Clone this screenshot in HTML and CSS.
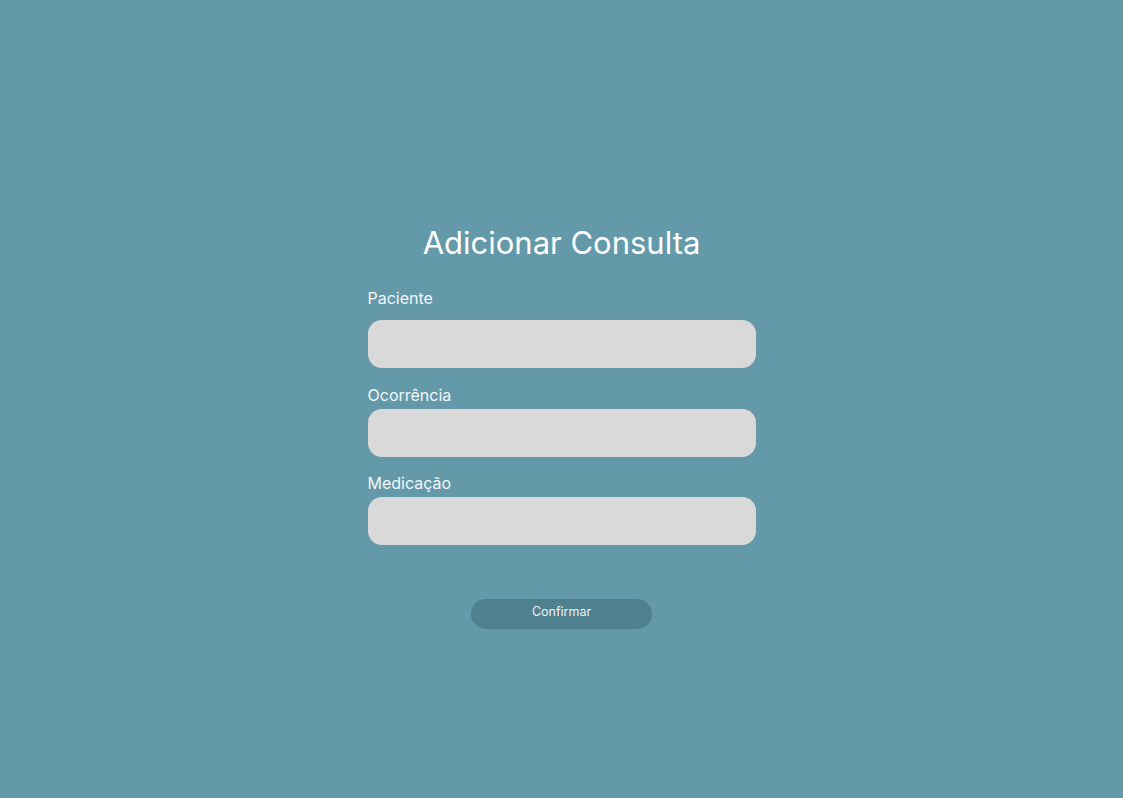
FILE: index.html
```html
<!DOCTYPE html>
<html lang="pt">
<head>
<meta charset="utf-8">
<title>Adicionar Consulta</title>
<link rel="stylesheet" href="styles.css">
</head>
<body>
<main class="page">
  <form class="form">
    <h1 class="title">Adicionar Consulta</h1>
    <div class="field field--first">
      <label class="label" for="paciente">Paciente</label>
      <input class="input" id="paciente" type="text">
    </div>
    <div class="field">
      <label class="label" for="ocorrencia">Ocorrência</label>
      <input class="input" id="ocorrencia" type="text">
    </div>
    <div class="field field--last">
      <label class="label" for="medicacao">Medicação</label>
      <input class="input" id="medicacao" type="text">
    </div>
    <button class="button" type="button">Confirmar</button>
  </form>
</main>
</body>
</html>
```
FILE: styles.css
```css
html, body {
  margin: 0;
  padding: 0;
  height: 100%;
}
body {
  background: #6399a9;
  font-family: Inter, "Noto Sans", sans-serif;
  color: #ffffff;
}
.page {
  min-height: 100%;
  display: flex;
  justify-content: center;
  padding-top: 223px;
  box-sizing: border-box;
}
.form {
  width: 388px;
  display: flex;
  flex-direction: column;
}
.title {
  margin: 0 0 25px;
  font-size: 31px;
  line-height: 40px;
  font-weight: 400;
  text-align: center;
  color: #ffffff;
}
.field {
  display: flex;
  flex-direction: column;
  margin-bottom: 16.5px;
}
.field--last {
  margin-bottom: 54px;
}
.label {
  font-size: 16px;
  line-height: 20px;
  color: #f4f6f7;
  margin-bottom: 4px;
}
.field--first .label {
  margin-bottom: 12px;
}
.input {
  height: 48px;
  border: none;
  border-radius: 14px;
  background: #d9d9d9;
  padding: 0 16px;
  box-sizing: border-box;
  font: inherit;
  outline: none;
}
.button {
  align-self: center;
  width: 181px;
  height: 30px;
  padding: 0 0 4px;
  border: none;
  border-radius: 15px;
  background: #4f808f;
  color: #eef3f5;
  font-family: Inter, "Noto Sans", sans-serif;
  font-size: 12.5px;
  line-height: 26px;
  cursor: pointer;
}
```
